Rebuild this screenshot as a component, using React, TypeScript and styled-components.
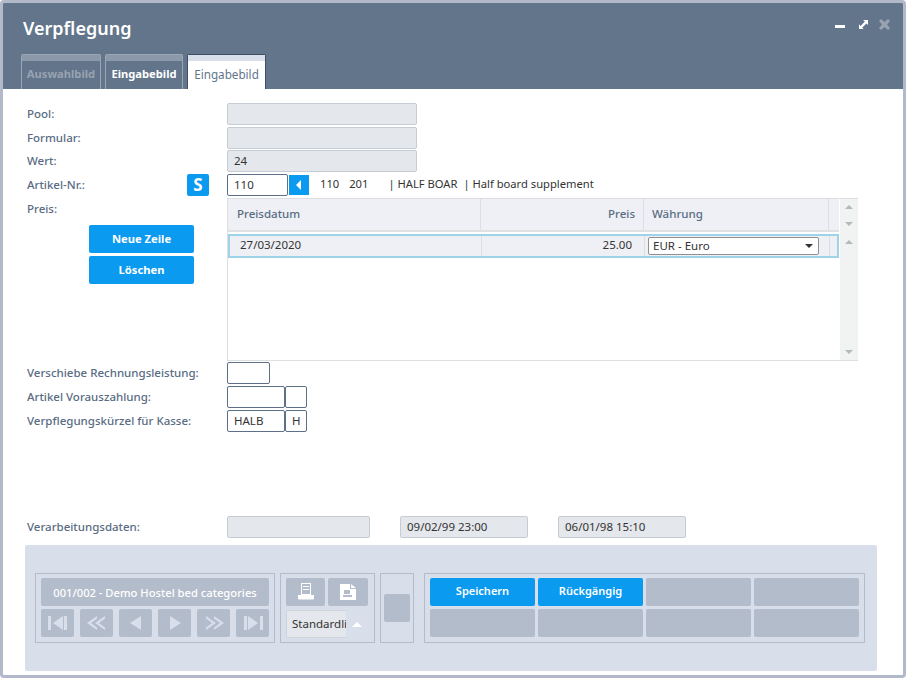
import React from "react";
import styled, { createGlobalStyle } from "styled-components";

const GlobalStyle = createGlobalStyle`
  html, body {
    margin: 0;
    padding: 0;
    background: #fff;
  }
  body {
    font-family: "Noto Sans", "Open Sans", sans-serif;
    font-size: 12px;
    color: #333;
  }
`;

const Win = styled.div`
  width: 906px;
  height: 678px;
  box-sizing: border-box;
  border: 3px solid #b1b9ca;
  border-radius: 4px;
  display: flex;
  flex-direction: column;
  background: #fff;
  overflow: hidden;
`;

const Header = styled.div`
  height: 86px;
  flex: none;
  background: #62758b;
  display: flex;
  flex-direction: column;
  justify-content: space-between;
`;

const TitleBar = styled.div`
  display: flex;
  justify-content: space-between;
  padding: 12px 13px 0 20px;
`;

const Title = styled.div`
  font-size: 18px;
  line-height: 26px;
  font-weight: 600;
  color: #fff;
`;

const Tabs = styled.div`
  display: flex;
  gap: 4px;
  padding-left: 18px;
`;

const Tab = styled.div<{ $variant: "off" | "on" | "active"; $w: number }>`
  width: ${p => p.$w}px;
  height: 35px;
  box-sizing: border-box;
  border: 1px solid ${p => (p.$variant === "active" ? "#3f4f63" : "#9aa6b6")};
  border-bottom: 0;
  border-radius: 2px 2px 0 0;
  background: ${p => (p.$variant === "active" ? "#fff" : "#62758b")};
  color: ${p => (p.$variant === "active" ? "#62758b" : p.$variant === "on" ? "#fff" : "#98a3b1")};
  font-weight: ${p => (p.$variant === "active" ? 400 : 700)};
  font-size: ${p => (p.$variant === "active" ? 11.7 : 11.2)}px;
  text-align: center;
  line-height: 26px;
  white-space: nowrap;
  &::before {
    content: "";
    display: block;
    height: 6px;
    background: ${p => (p.$variant === "active" ? "#d8deea" : "#8c99ab")};
  }
`;

const Body = styled.div`
  flex: 1;
  min-height: 0;
  display: flex;
  flex-direction: column;
  padding: 14px 0 0 24px;
`;

const Row = styled.div<{ $mb?: number }>`
  display: flex;
  height: 22px;
  margin-bottom: ${p => p.$mb ?? 2}px;
`;

const Label = styled.label`
  width: 200px;
  flex: none;
  color: #596c83;
  font-weight: 500;
  line-height: 21px;
  font-size: 11.5px;
  white-space: nowrap;
`;

const Field = styled.div<{ $w: number; $ml?: number; $tone?: "grey" | "white" }>`
  width: ${p => p.$w}px;
  margin-left: ${p => p.$ml ?? 0}px;
  height: 22px;
  box-sizing: border-box;
  flex: none;
  padding-left: 6px;
  line-height: 20px;
  font-size: 11.5px;
  border-radius: 2px;
  color: #333;
  background: ${p => (p.$tone === "white" ? "#fff" : "#e4e7eb")};
  border: 1px solid ${p => (p.$tone === "white" ? "#5d7088" : "#c6ccd4")};
`;

const SButton = styled.div`
  width: 22px;
  height: 22px;
  margin: 0 18px 0 -40px;
  flex: none;
  border-radius: 2px;
  background: #0a9af0;
  color: #fff;
  font-weight: 700;
  font-size: 17px;
  line-height: 22px;
  text-align: center;
`;

const ArrowBtn = styled.div`
  width: 20px;
  height: 20px;
  margin: 1px 0 0 1px;
  background: #0a9af0;
  display: flex;
  align-items: center;
  justify-content: center;
`;

const Info = styled.span<{ $ml: number }>`
  margin-left: ${p => p.$ml}px;
  line-height: 20px;
  font-size: 11.2px;
  color: #333;
  white-space: nowrap;
`;

const PriceArea = styled.div`
  display: flex;
  height: 163px;
  margin-bottom: 1px;
`;

const LeftCol = styled.div`
  width: 200px;
  flex: none;
  display: flex;
  flex-direction: column;
`;

const LeftButtons = styled.div`
  display: flex;
  flex-direction: column;
  gap: 3px;
  padding: 6px 0 0 62px;
`;

const BlueBtn = styled.div`
  width: 105px;
  height: 28px;
  border-radius: 2px;
  background: #0a9af0;
  color: #fff;
  font-weight: 700;
  font-size: 11.2px;
  line-height: 27px;
  text-align: center;
`;

const Table = styled.div`
  width: 631px;
  height: 163px;
  box-sizing: border-box;
  border: 1px solid #dcdfe2;
  display: flex;
`;

const TableMain = styled.div`
  width: 611px;
  flex: none;
  display: flex;
  flex-direction: column;
`;

const HeadRow = styled.div`
  height: 33px;
  box-sizing: border-box;
  flex: none;
  display: grid;
  grid-template-columns: 253px 163px 185px 10px;
  background: #eef0f5;
  border-bottom: 2px solid #dfe1e3;
`;

const HeadCell = styled.div<{ $right?: boolean; $pl?: number }>`
  color: #596c83;
  font-weight: 500;
  font-size: 11.5px;
  line-height: 30px;
  padding: 0 8px 0 ${p => p.$pl ?? 9}px;
  text-align: ${p => (p.$right ? "right" : "left")};
  border-right: 1px solid #dcdfe2;
`;

const DataRow = styled.div`
  height: 24px;
  margin-top: 2px;
  box-sizing: border-box;
  flex: none;
  display: grid;
  grid-template-columns: 252px 163px 185px 10px;
  background: #eef0f5;
  border: 2px solid #9fd3ea;
`;

const DataCell = styled.div<{ $right?: boolean }>`
  font-size: 11.5px;
  line-height: 18px;
  padding: 0 ${p => (p.$right ? 12 : 10)}px 0 10px;
  text-align: ${p => (p.$right ? "right" : "left")};
  border-right: 1px solid #dcdfe2;
  color: #333;
`;

const SelectCell = styled.div`
  padding: 1px 10px 0 3px;
  border-right: 1px solid #dcdfe2;
`;

const FakeSelect = styled.div`
  height: 18px;
  box-sizing: border-box;
  border: 1px solid #8f8f8f;
  border-radius: 2px;
  background: #fff;
  font-size: 11.5px;
  line-height: 16px;
  padding: 0 5px 0 4px;
  display: flex;
  justify-content: space-between;
  align-items: center;
  color: #333;
`;

const ScrollCol = styled.div`
  width: 18px;
  margin-left: 1px;
  flex: none;
  background: #f1f2f2;
  display: flex;
  flex-direction: column;
  align-items: center;
  padding: 6px 0;
  box-sizing: border-box;
`;

const ScrollSpacer = styled.div<{ $h?: number }>`
  height: ${p => (p.$h ? `${p.$h}px` : "auto")};
  flex: ${p => (p.$h ? "none" : 1)};
`;

const Tri = styled.div<{ $up?: boolean; $color?: string; $size?: number }>`
  width: 0;
  height: 0;
  flex: none;
  border-left: ${p => p.$size ?? 4}px solid transparent;
  border-right: ${p => p.$size ?? 4}px solid transparent;
  ${p => (p.$up ? "border-bottom" : "border-top")}: ${p => p.$size ?? 4}px solid ${p => p.$color ?? "#b4b9ba"};
`;

const Spacer = styled.div<{ $h: number }>`
  height: ${p => p.$h}px;
  flex: none;
`;

const Footer = styled.div`
  width: 852px;
  height: 126px;
  margin: 7px 0 0 -2px;
  background: #d8deea;
  border-radius: 2px;
  box-sizing: border-box;
  padding: 28px 0 0 10px;
  display: flex;
  gap: 5px;
  align-items: flex-start;
`;

const Group = styled.div<{ $w: number; $ml?: number }>`
  width: ${p => p.$w}px;
  margin-left: ${p => p.$ml ?? 0}px;
  height: 70px;
  box-sizing: border-box;
  flex: none;
  border: 1px solid #b3bccb;
  padding: 4px 5px;
  display: flex;
  flex-wrap: wrap;
  align-content: flex-start;
  gap: 3px;
`;

const GreyBtn = styled.div<{ $w: number }>`
  width: ${p => p.$w}px;
  height: 28px;
  flex: none;
  border-radius: 2px;
  background: #b3bccb;
  color: #fff;
  font-size: 11.2px;
  font-weight: 500;
  white-space: nowrap;
  display: flex;
  align-items: center;
  justify-content: center;
`;

const NavRow = styled.div`
  display: flex;
  gap: 6px;
`;

const ActionBtn = styled.div`
  width: 105px;
  height: 28px;
  flex: none;
  border-radius: 2px;
  background: #0a9af0;
  color: #fff;
  font-size: 11px;
  font-weight: 600;
  line-height: 26px;
  text-align: center;
`;

const ListBox = styled.div`
  width: 60px;
  height: 28px;
  box-sizing: border-box;
  flex: none;
  margin-top: 1px;
  background: #e4e7eb;
  border: 1px solid #d0d5dc;
  border-right: 0;
  border-radius: 2px 0 0 2px;
  font-size: 11.5px;
  line-height: 26px;
  padding-left: 5px;
  overflow: hidden;
  white-space: nowrap;
  color: #333;
`;

const ListArrow = styled.div`
  display: flex;
  align-items: center;
  margin-left: 3px;
  padding-top: 2px;
`;

const CenterGroup = styled(Group)`
  align-content: center;
  padding: 0 3px;
  justify-content: center;
`;

const NavIcon = ({ d }: { d: string }) => (
  <svg width="24" height="18" viewBox="0 0 24 18">
    <path d={d} fill="#d8deea" />
  </svg>
);

const navIcons = [
  "M2 2h3v14H2zM7 9l10-7v14zM18 2h3v14h-3z",
  "M2 9l10-7v2.500L6 9l6 4.500V16zM10 9l10-7v2.500L14 9l6 4.500V16z",
  "M6 9l11-7v14z",
  "M7 2l11 7-11 7z",
  "M22 9L12 2v2.500L18 9l-6 4.500V16zM14 9L4 2v2.500L10 9l-6 4.500V16z",
  "M3 2h3v14H3zM7 2l10 7-10 7zM19 2h3v14h-3z"
];

export default function App() {
  return (
    <Win>
      <GlobalStyle />
      <Header>
        <TitleBar>
          <Title>Verpflegung</Title>
          <svg width="55" height="18" viewBox="0 0 55 18">
            <rect x="0" y="10" width="10" height="3" fill="#fff" />
            <path d="M28 5h5v5l-1.600-1.600-4.300 4.300L28.700 14H24V9.300l1.600 1.600 4.300-4.300z" fill="#fff" />
            <path d="M44 6l2-2 3.500 3L53 4l2 2-3 3.500 3 3.500-2 2-3.500-3L46 15l-2-2 3-3.500z" fill="#98a3b1" />
          </svg>
        </TitleBar>
        <Tabs>
          <Tab $variant="off" $w={80}>Auswahlbild</Tab>
          <Tab $variant="on" $w={78}>Eingabebild</Tab>
          <Tab $variant="active" $w={79}>Eingabebild</Tab>
        </Tabs>
      </Header>
      <Body>
        <Row>
          <Label>Pool:</Label>
          <Field $w={190} />
        </Row>
        <Row $mb={1}>
          <Label>Formular:</Label>
          <Field $w={190} />
        </Row>
        <Row>
          <Label>Wert:</Label>
          <Field $w={190}>24</Field>
        </Row>
        <Row>
          <Label>Artikel-Nr.:</Label>
          <SButton>S</SButton>
          <Field $w={61} $tone="white">110</Field>
          <ArrowBtn>
            <svg width="8" height="10" viewBox="0 0 8 10">
              <path d="M6 0v10L1 5z" fill="#fff" />
            </svg>
          </ArrowBtn>
          <Info $ml={11}>110</Info>
          <Info $ml={10}>201</Info>
          <Info $ml={20}>| HALF BOAR</Info>
          <Info $ml={6}>| Half board supplement</Info>
        </Row>
        <PriceArea>
          <LeftCol>
            <Label>Preis:</Label>
            <LeftButtons>
              <BlueBtn>Neue Zeile</BlueBtn>
              <BlueBtn>Löschen</BlueBtn>
            </LeftButtons>
          </LeftCol>
          <Table>
            <TableMain>
              <HeadRow>
                <HeadCell>Preisdatum</HeadCell>
                <HeadCell $right>Preis</HeadCell>
                <HeadCell $pl={8}>Währung</HeadCell>
                <HeadCell />
              </HeadRow>
              <DataRow>
                <DataCell>27/03/2020</DataCell>
                <DataCell $right>25.00</DataCell>
                <SelectCell>
                  <FakeSelect>
                    EUR - Euro
                    <Tri $color="#333" />
                  </FakeSelect>
                </SelectCell>
                <DataCell />
              </DataRow>
            </TableMain>
            <ScrollCol>
              <Tri $up />
              <ScrollSpacer $h={13} />
              <Tri />
              <ScrollSpacer $h={14} />
              <Tri $up />
              <ScrollSpacer />
              <Tri />
            </ScrollCol>
          </Table>
        </PriceArea>
        <Row>
          <Label>Verschiebe Rechnungsleistung:</Label>
          <Field $w={43} $tone="white" />
        </Row>
        <Row>
          <Label>Artikel Vorauszahlung:</Label>
          <Field $w={58} $tone="white" />
          <Field $w={22} $tone="white" />
        </Row>
        <Row>
          <Label>Verpflegungskürzel für Kasse:</Label>
          <Field $w={58} $tone="white">HALB</Field>
          <Field $w={22} $tone="white">H</Field>
        </Row>
        <Spacer $h={82} />
        <Row $mb={0}>
          <Label>Verarbeitungsdaten:</Label>
          <Field $w={143} />
          <Field $w={128} $ml={30}>09/02/99 23:00</Field>
          <Field $w={128} $ml={30}>06/01/98 15:10</Field>
        </Row>
        <Footer>
          <Group $w={240}>
            <GreyBtn $w={228}>001/002 - Demo Hostel bed categories</GreyBtn>
            <NavRow>
              {navIcons.map(d => (
                <GreyBtn $w={33} key={d}>
                  <NavIcon d={d} />
                </GreyBtn>
              ))}
            </NavRow>
          </Group>
          <Group $w={95}>
            <GreyBtn $w={39}>
              <svg width="18" height="18" viewBox="0 0 18 18">
                <path d="M4 0h10v12H4zM5 1v10h8V1zM6 3h6v1H6zM6 6h6v1H6z" fill="#fff" fillRule="evenodd" />
                <path d="M1 12h16v3.500a1 1 0 0 1-1 1H2a1 1 0 0 1-1-1z" fill="#fff" />
              </svg>
            </GreyBtn>
            <GreyBtn $w={40}>
              <svg width="18" height="18" viewBox="0 0 18 18">
                <path d="M1 1h10v5h6v11H1zM5 7h6v4H5zM4 12h9v2H4z" fill="#fff" fillRule="evenodd" />
                <path d="M12 1l5 4h-5z" fill="#fff" />
              </svg>
            </GreyBtn>
            <ListBox>Standardliste</ListBox>
            <ListArrow>
              <Tri $up $color="#fff" $size={5} />
            </ListArrow>
          </Group>
          <CenterGroup $w={34}>
            <GreyBtn $w={26} />
          </CenterGroup>
          <Group $w={441} $ml={5}>
            <ActionBtn>Speichern</ActionBtn>
            <ActionBtn>Rückgängig</ActionBtn>
            <GreyBtn $w={105} />
            <GreyBtn $w={105} />
            <GreyBtn $w={105} />
            <GreyBtn $w={105} />
            <GreyBtn $w={105} />
            <GreyBtn $w={105} />
          </Group>
        </Footer>
      </Body>
    </Win>
  );
}
